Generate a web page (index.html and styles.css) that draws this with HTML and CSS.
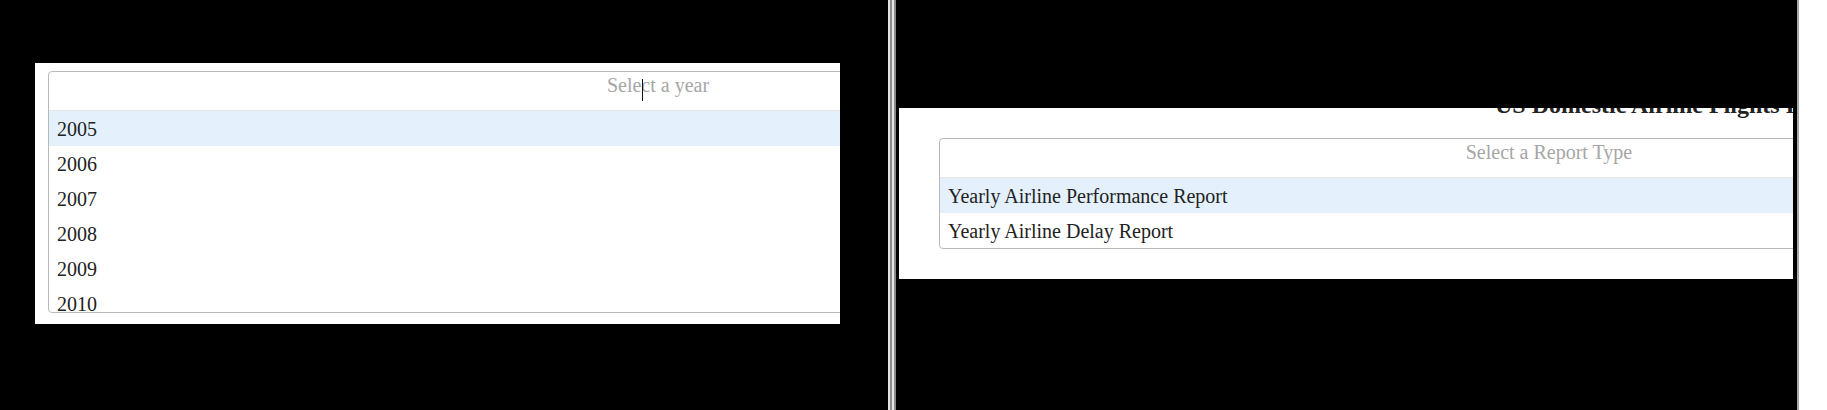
FILE: index.html
```html
<!DOCTYPE html>
<html lang="en">
<head>
<meta charset="utf-8">
<title>Select screens</title>
<link rel="stylesheet" href="styles.css">
</head>
<body>
<div class="screen">
  <div class="pane pane-left">
    <div class="panel panel-year">
      <div class="select">
        <div class="select-input">
          <span class="placeholder">Select a year</span>
          <span class="mouse-caret"></span>
        </div>
        <ul class="options options-scroll">
          <li class="option active">2005</li>
          <li class="option">2006</li>
          <li class="option">2007</li>
          <li class="option">2008</li>
          <li class="option">2009</li>
          <li class="option">2010</li>
          <li class="option">2011</li>
        </ul>
      </div>
    </div>
  </div>
  <div class="divider"></div>
  <div class="pane pane-right">
    <div class="panel panel-report">
      <h2 class="title">US Domestic Airline Flights Performance</h2>
      <div class="select select-report">
        <div class="select-input">
          <span class="placeholder">Select a Report Type</span>
        </div>
        <ul class="options">
          <li class="option active">Yearly Airline Performance Report</li>
          <li class="option">Yearly Airline Delay Report</li>
        </ul>
      </div>
    </div>
  </div>
  <div class="edge"></div>
</div>
</body>
</html>
```

FILE: styles.css
```css
html, body {
  margin: 0;
  padding: 0;
  background: #000;
}

body {
  font-family: "Liberation Serif", "Times New Roman", serif;
  color: #222;
}

.screen {
  display: flex;
  width: 1827px;
  height: 410px;
  overflow: hidden;
}

.pane {
  box-sizing: border-box;
  flex-shrink: 0;
}

.pane-left {
  width: 888px;
  padding: 63px 0 0 35px;
}

.pane-right {
  width: 901px;
  padding: 108px 0 0 3px;
}

.panel {
  background: #fff;
  overflow: hidden;
  box-sizing: border-box;
}

.panel-year {
  width: 805px;
  height: 261px;
  padding: 8px 0 0 13px;
}

.panel-report {
  width: 894px;
  height: 171px;
  padding: 0 0 0 40px;
}

.title {
  margin: -17px 0 0 0;
  padding-left: 556px;
  font-size: 24px;
  line-height: 28px;
  font-weight: bold;
  white-space: nowrap;
  color: #222;
}

.select {
  width: 1218px;
  border: 1px solid #b9b9b9;
  border-radius: 4px;
  background: #fff;
  overflow: hidden;
}

.select-report {
  margin-top: 19px;
}

.select-input {
  position: relative;
  height: 39px;
  box-sizing: border-box;
  padding-top: 2px;
  border-bottom: 1px solid #e6e6e6;
  text-align: center;
  font-size: 20px;
  line-height: 23px;
}

.placeholder {
  color: #a6a6a6;
}

.mouse-caret {
  position: absolute;
  left: 593px;
  top: 7px;
  width: 1px;
  height: 22px;
  background: #111;
}

.options {
  list-style: none;
  margin: 0;
  padding: 0;
}

.options-scroll {
  height: 201px;
  overflow: hidden;
}

.option {
  height: 34px;
  padding: 1px 0 0 8px;
  line-height: 35px;
  font-size: 20px;
  color: #222;
  white-space: nowrap;
}

.option.active {
  background: #e4f1fd;
}

.divider {
  width: 8px;
  flex-shrink: 0;
  background: linear-gradient(to right,
    #e2e2e2 0, #e2e2e2 2px,
    #8a8a8a 2px, #8a8a8a 4px,
    #e6e6e6 4px, #e6e6e6 6px,
    #8a8a8a 6px, #8a8a8a 8px);
}

.edge {
  flex: 1;
  border-left: 2px solid #a8a8a8;
  background: #fff;
}
```
